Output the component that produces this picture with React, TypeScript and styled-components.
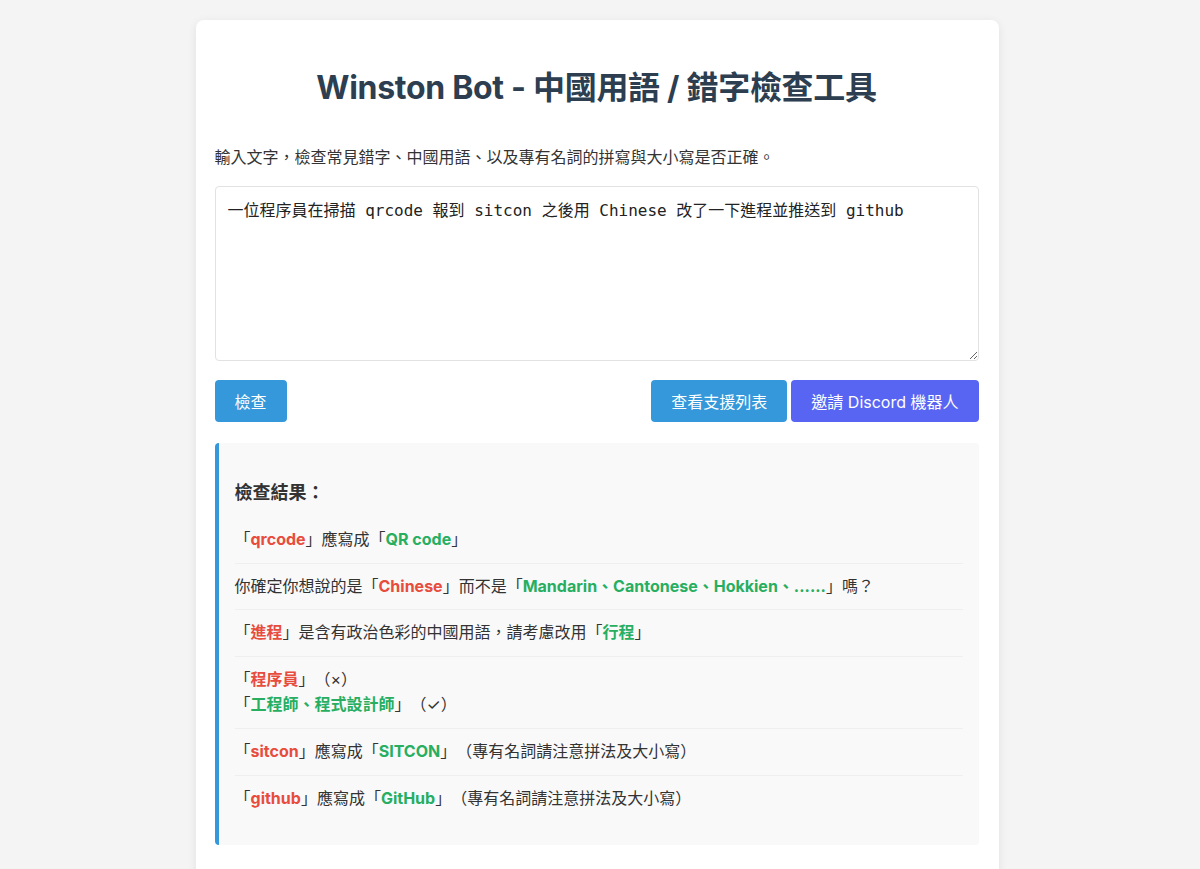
import React from "react";
import styled, { createGlobalStyle } from "styled-components";

const Global = createGlobalStyle`
  html, body { margin: 0; padding: 0; }
  body {
    background: #f4f4f4;
    font-family: Inter, "Noto Sans CJK TC", sans-serif;
    color: #333;
    text-spacing-trim: space-all;
  }
`;

const Page = styled.div`
  display: flex;
  justify-content: center;
  padding: 20px 6px 20px 0;
`;

const Card = styled.main`
  width: 803px;
  box-sizing: border-box;
  background: #fff;
  border-radius: 8px;
  box-shadow: 0 2px 10px rgba(0, 0, 0, 0.08);
  padding: 20px 20px 40px 19px;
  display: flex;
  flex-direction: column;
`;

const Title = styled.h1`
  margin: 29px 0 37px;
  text-align: center;
  font-size: 32px;
  line-height: 38px;
  font-weight: 700;
  color: #2c3e50;
  letter-spacing: -0.3px;
`;

const Intro = styled.p`
  margin: 0 0 16px;
  font-size: 16px;
  line-height: 26px;
  color: #333;
`;

const Input = styled.textarea`
  display: block;
  width: 100%;
  height: 175px;
  box-sizing: border-box;
  padding: 12px;
  border: 1px solid #e2e2e2;
  border-radius: 4px;
  font-family: "DejaVu Sans Mono", "Noto Sans CJK TC", monospace;
  font-size: 16px;
  line-height: 24px;
  color: #222;
  resize: vertical;
  outline: none;
`;

const Actions = styled.div`
  display: flex;
  align-items: center;
  gap: 4px;
  margin: 19px 0 21px;
`;

const Spacer = styled.div`
  flex: 1;
`;

const Button = styled.button<{ $variant?: "blue" | "purple" }>`
  height: 42px;
  padding: 0 20px;
  border: none;
  border-radius: 4px;
  background: ${(p) => (p.$variant === "purple" ? "#5865f2" : "#3498db")};
  color: #fff;
  font-family: Inter, "Noto Sans CJK TC", sans-serif;
  font-size: 16px;
  cursor: pointer;
`;

const Results = styled.section`
  background: #f9f9f9;
  border-left: 4px solid #3498db;
  border-radius: 4px;
  padding: 16px 16px 24px;
`;

const ResultsTitle = styled.h3`
  margin: 20px 0 11px;
  font-size: 18px;
  line-height: 27px;
  font-weight: 700;
  color: #333;
`;

const List = styled.ul`
  list-style: none;
  margin: 0;
  padding: 0;
`;

const Item = styled.li`
  padding: 10px 0;
  font-size: 16px;
  line-height: 25.6px;
  color: #333;
  border-bottom: 1px solid #efefef;
  &:last-child { border-bottom: none; }
`;

const Wrong = styled.span`
  color: #e74c3c;
  font-weight: 700;
`;

const Right = styled.span`
  color: #27ae60;
  font-weight: 700;
`;

export default function App() {
  return (
    <>
      <Global />
      <Page>
        <Card>
          <Title>Winston Bot - 中國用語 / 錯字檢查工具</Title>
          <Intro>輸入文字，檢查常見錯字、中國用語、以及專有名詞的拼寫與大小寫是否正確。</Intro>
          <Input defaultValue="一位程序員在掃描 qrcode 報到 sitcon 之後用 Chinese 改了一下進程並推送到 github" />
          <Actions>
            <Button>檢查</Button>
            <Spacer />
            <Button>查看支援列表</Button>
            <Button $variant="purple">邀請 Discord 機器人</Button>
          </Actions>
          <Results>
            <ResultsTitle>檢查結果：</ResultsTitle>
            <List>
              <Item>
                「<Wrong>qrcode</Wrong>」應寫成「<Right>QR code</Right>」
              </Item>
              <Item>
                你確定你想說的是「<Wrong>Chinese</Wrong>」而不是「<Right>Mandarin、Cantonese、Hokkien、......</Right>」嗎？
              </Item>
              <Item>
                「<Wrong>進程</Wrong>」是含有政治色彩的中國用語，請考慮改用「<Right>行程</Right>」
              </Item>
              <Item>
                「<Wrong>程序員</Wrong>」（×）
                <br />
                「<Right>工程師、程式設計師</Right>」（✓）
              </Item>
              <Item>
                「<Wrong>sitcon</Wrong>」應寫成「<Right>SITCON</Right>」（專有名詞請注意拼法及大小寫）
              </Item>
              <Item>
                「<Wrong>github</Wrong>」應寫成「<Right>GitHub</Right>」（專有名詞請注意拼法及大小寫）
              </Item>
            </List>
          </Results>
        </Card>
      </Page>
    </>
  );
}
